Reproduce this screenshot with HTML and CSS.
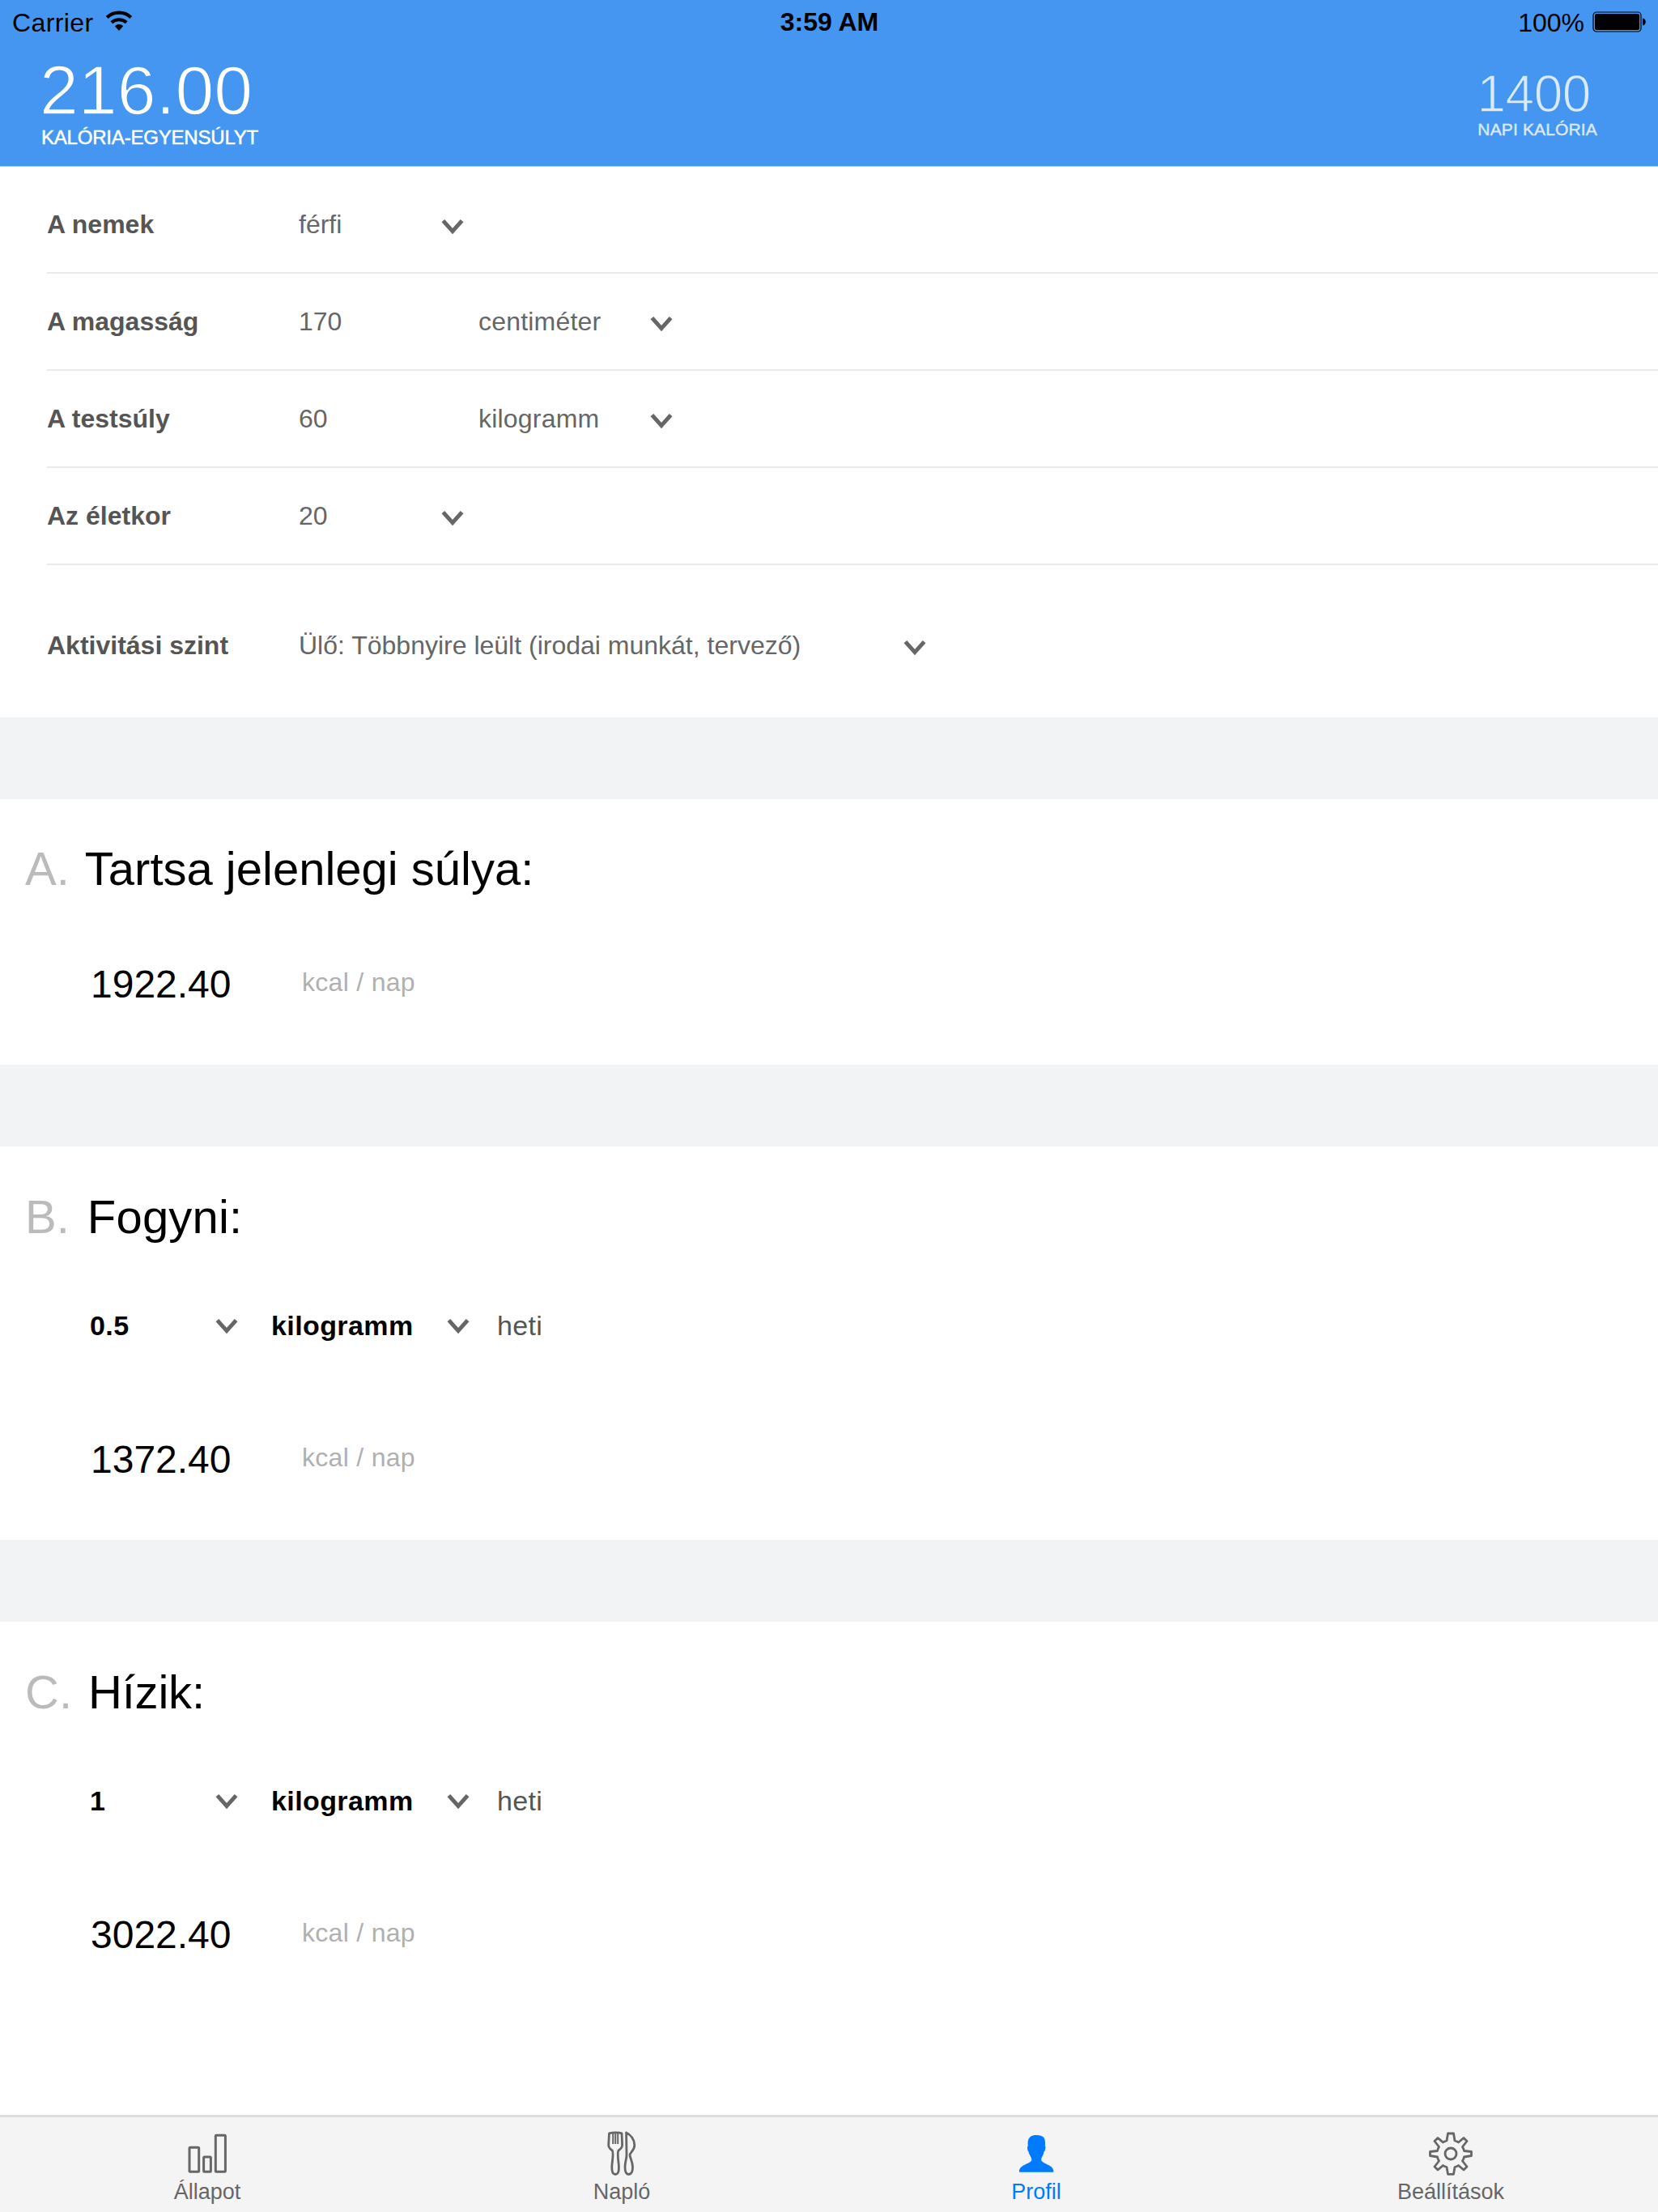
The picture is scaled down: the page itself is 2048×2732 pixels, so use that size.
FILE: index.html
```html
<!DOCTYPE html>
<html lang="hu">
<head>
<meta charset="utf-8">
<title>Profil</title>
<link rel="stylesheet" href="styles.css">
</head>
<body>
<svg width="0" height="0" class="defs">
  <symbol id="chevron" viewBox="0 0 28 20"><path d="M2.400 2.600 14 15.600 25.600 2.600" fill="none" stroke="#666" stroke-width="5"/></symbol>
</svg>
<div class="screen">
  <header class="header">
    <div class="status">
      <div class="status-left"><span class="carrier">Carrier</span>
        <svg class="wifi" width="34" height="26" viewBox="0 0 34 26"><g fill="none" stroke="#000"><path d="M2.200 8.600A21.500 21.500 0 0 1 31.800 8.600" stroke-width="4.200"/><path d="M7.800 14.800A13.500 13.500 0 0 1 26.200 14.800" stroke-width="4"/></g><path d="M11.800 19.200a7.500 7.500 0 0 1 10.400 0L17 25z"/></svg>
      </div>
      <div class="status-time">3:59 AM</div>
      <div class="status-right"><span>100%</span>
        <svg class="battery" width="67" height="26" viewBox="0 0 67 26"><rect x="1" y="1" width="59" height="24" rx="4" fill="none" stroke="#000" stroke-width="1.200"/><rect x="3" y="3" width="55" height="20" rx="2"/><path d="M62 8.500c5 .500 5 8.500 0 9z"/></svg>
      </div>
    </div>
    <div class="totals">
      <div class="balance"><div class="balance-value">216.00</div><div class="balance-label">KALÓRIA-EGYENSÚLYT</div></div>
      <div class="daily"><div class="daily-value">1400</div><div class="daily-label">NAPI KALÓRIA</div></div>
    </div>
  </header>
  <main>
    <section class="form">
      <div class="row"><b class="name">A nemek</b><span class="value">férfi</span><svg class="chev"><use href="#chevron"/></svg></div>
      <div class="row wide"><b class="name">A magasság</b><span class="value">170</span><span class="unit">centiméter</span><svg class="chev"><use href="#chevron"/></svg></div>
      <div class="row wide"><b class="name">A testsúly</b><span class="value">60</span><span class="unit">kilogramm</span><svg class="chev"><use href="#chevron"/></svg></div>
      <div class="row"><b class="name">Az életkor</b><span class="value">20</span><svg class="chev"><use href="#chevron"/></svg></div>
      <div class="row activity"><b class="name">Aktivitási szint</b><span class="value">Ülő: Többnyire leült (irodai munkát, tervező)</span><svg class="chev"><use href="#chevron"/></svg></div>
    </section>
    <section class="goal keep">
      <h2 class="title"><span class="letter">A.</span><span class="title-a">Tartsa jelenlegi súlya:</span></h2>
      <div class="result"><span class="kcal">1922.40</span><span class="per">kcal / nap</span></div>
    </section>
    <section class="goal">
      <h2 class="title"><span class="letter">B.</span><span class="title-b">Fogyni:</span></h2>
      <div class="pick"><b class="amount">0.5</b><svg class="chev"><use href="#chevron"/></svg><b class="mass">kilogramm</b><svg class="chev"><use href="#chevron"/></svg><span class="weekly">heti</span></div>
      <div class="result"><span class="kcal">1372.40</span><span class="per">kcal / nap</span></div>
    </section>
    <section class="goal">
      <h2 class="title"><span class="letter">C.</span><span class="title-c">Hízik:</span></h2>
      <div class="pick"><b class="amount">1</b><svg class="chev"><use href="#chevron"/></svg><b class="mass">kilogramm</b><svg class="chev"><use href="#chevron"/></svg><span class="weekly">heti</span></div>
      <div class="result"><span class="kcal">3022.40</span><span class="per">kcal / nap</span></div>
    </section>
  </main>
  <nav class="tabs">
    <div class="tab"><svg width="60" height="60" viewBox="0 0 60 60"><g fill="none" stroke="#666" stroke-width="3"><rect x="8" y="20.300" width="11.700" height="30" rx="1"/><rect x="25.600" y="32" width="8.800" height="18.300" rx="1"/><rect x="40.300" y="5.300" width="12.100" height="45" rx="1"/></g></svg><span>Állapot</span></div>
    <div class="tab"><svg width="60" height="60" viewBox="0 0 60 60"><g fill="none" stroke="#666" stroke-width="2.800" stroke-linejoin="round"><path d="M14.500 2.800Q22.200 .8 30 2.800L30.600 17Q30.800 21 26 24C24.500 26 25 31 26.200 41C27 50 25.500 53.500 22.200 53.500S17.200 50 18 41C19.300 31 19.800 26 18.300 24Q13.500 21 13.700 17z"/><path d="M19.200 3V16M22.200 3V16M25.200 3V16" stroke-width="2"/><path d="M35.600 2C41 4.500 45.800 10.500 45.800 17.500C45.800 24 40 26.500 40 29.500C40 32.500 43.500 38 43.500 44.500C43.500 50.500 41.500 53.500 38.500 53.500S34 50.500 34 44.500C34 38.500 36 34.500 36 29.500z"/></g></svg><span>Napló</span></div>
    <div class="tab active"><svg width="60" height="60" viewBox="0 0 60 60"><path fill="#007aff" d="M29.500 5C35 5 38.500 6.500 40 9Q41.500 13 40.800 18Q42 19.500 41 23Q40.500 25 39.500 25.500C39 30 36.200 32 36.200 36C37.500 40.500 49.500 41 51.300 48.500V50.700H9V48.500C11 41 23 40.500 24.300 36C24.300 32 21.300 30 20.500 25.500Q18.800 24 19 20L19.800 18C18.500 9 23 5 29.500 5z"/></svg><span>Profil</span></div>
    <div class="tab"><svg width="60" height="60" viewBox="0 0 60 60"><g fill="none" stroke="#666" stroke-width="2.800" stroke-linejoin="round"><circle cx="30" cy="28" r="7"/><path d="M26.500 3H33.500L35 12Q37.500 12.500 39.500 14L46 8.500L50 12.500L44.500 19.500Q46 22 46.500 24.500L55.500 25.500V30.500L46.500 32Q46 34.500 44.500 37L50 44L46 48L39.500 42.500Q37.500 44 35 44.500L33.500 53.300H26.500L25 44.500Q22.500 44 20.500 42.500L14 48L10 44L15.500 37Q14 34.500 13.500 32L4.500 30.500V25.500L13.500 24.500Q14 22 15.500 19.500L10 12.500L14 8.500L20.500 14Q22.500 12.500 25 12z"/></g></svg><span>Beállítások</span></div>
  </nav>
</div>
</body>
</html>
```
FILE: styles.css
```css
* { box-sizing: border-box; }
body { margin: 0; font-family: "Liberation Sans", Arial, sans-serif; background: #fff; }
.defs { display: block; }
.screen { width: 2048px; height: 2732px; display: flex; flex-direction: column; overflow: hidden; }
main { flex: 1; }

.header { height: 206px; background: #4596f1; border-bottom: 1px solid #a9d0fb; }
.status { display: grid; grid-template-columns: 1fr 1fr 1fr; height: 56px; line-height: 55px; padding: 0 14px 0 15px; font-size: 32px; color: #000; }
.status-left, .status-right { display: flex; align-items: center; }
.status-left { gap: 14px; }
.status-right { justify-content: flex-end; gap: 10px; }
.status-time { text-align: center; font-weight: 700; }
.carrier { letter-spacing: .4px; }
.wifi { margin-top: -4px; }
.battery { margin-top: -2px; }
.totals { display: flex; justify-content: space-between; padding: 13px 75px 0 51px; color: #fff; }
/* A stroke in the header colour trims the numerals to a light weight. */
.balance-value { margin-left: -2px; font-size: 86px; line-height: 84px; -webkit-text-stroke: 1.5px #4596f1; }
.balance-label { font-size: 24px; line-height: 34px; letter-spacing: -.2px; -webkit-text-stroke: .5px #fff; }
.daily { padding-top: 17px; opacity: .8; text-align: center; }
.daily-value { margin-left: -9px; font-size: 64px; line-height: 61px; letter-spacing: -.5px; -webkit-text-stroke: 1.3px #4596f1; }
.daily-label { font-size: 21px; line-height: 26px; letter-spacing: .15px; -webkit-text-stroke: .4px #fff; }

.form { height: 680px; padding: 12px 0 0 58px; font-size: 32px; }
.row { height: 120px; border-bottom: 2px solid #ebebeb; display: grid; grid-template-columns: 311px 176px 28px; align-items: center; color: #666; }
.row.wide { grid-template-columns: 311px 222px 212px 28px; }
.row.activity { height: 188px; padding-top: 10px; border: 0; grid-template-columns: 311px 747px 28px; }
.name { color: #555; }
.value, .unit { white-space: nowrap; }
.unit { letter-spacing: .2px; }
.chev { width: 28px; height: 20px; display: block; margin-top: 6px; }

.goal { border-top: 101px solid #f2f3f5; height: 587px; padding: 67px 0 0 31px; }
.goal.keep { height: 429px; padding-top: 66px; }
.title { margin: 0; display: flex; gap: 19px; font-size: 58px; line-height: 40px; font-weight: 400; color: #000; }
.letter { color: #bbb; }
.title-b { margin-left: 3px; letter-spacing: .2px; }
.title-c { margin-left: 1px; letter-spacing: -.2px; }
.pick { display: flex; align-items: center; height: 40px; margin: 94px 0 0 80px; font-size: 34px; color: #000; }
.pick .chev { margin-top: 2px; }
.amount { width: 155px; letter-spacing: .4px; }
.mass { width: 217px; margin-left: 41px; letter-spacing: .4px; }
.weekly { margin-left: 34px; color: #555; letter-spacing: .3px; }
.result { display: flex; align-items: baseline; line-height: 50px; margin: 121px 0 0 81px; }
.keep .result { margin-top: 98px; }
.kcal { width: 261px; font-size: 48px; color: #000; }
.per { font-size: 32px; letter-spacing: .3px; color: #b0b0b0; position: relative; top: -8px; }

.tabs { height: 120px; border-top: 3px solid #dcdcdc; background: #f4f4f4; display: grid; grid-template-columns: repeat(4, 1fr); }
.tab { display: flex; flex-direction: column; align-items: center; padding-top: 17px; font-size: 27px; line-height: 30px; color: #666; }
.tab svg { display: block; }
.tab.active { color: #007aff; }
```
